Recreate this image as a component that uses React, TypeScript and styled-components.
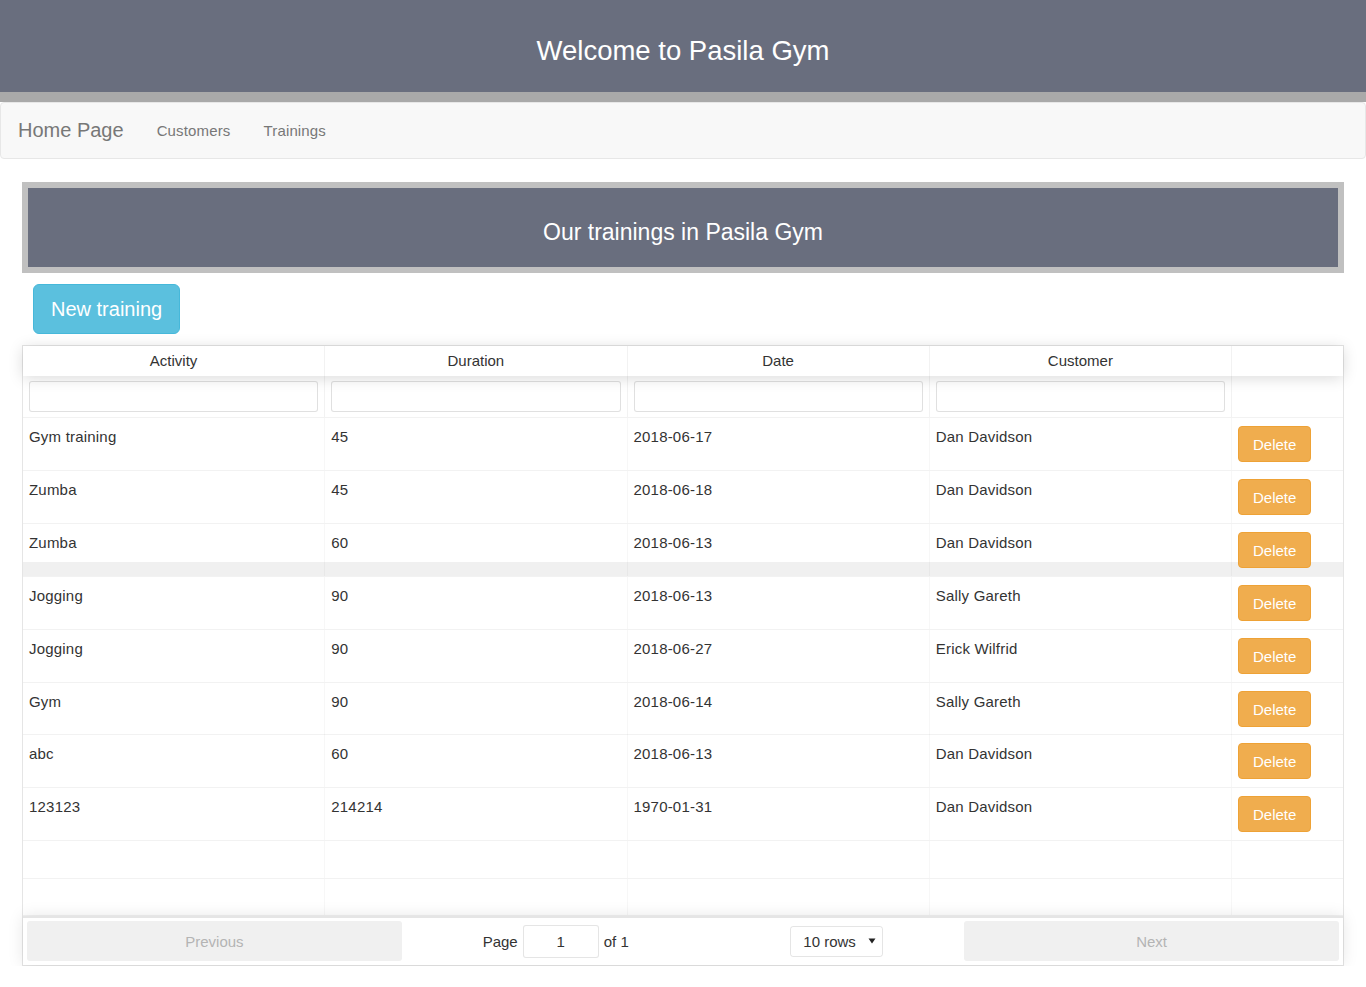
import React from "react";
import styled, { createGlobalStyle } from "styled-components";

const GlobalStyle = createGlobalStyle`
  html, body { margin: 0; padding: 0; background: #fff; }
  body {
    font-family: "Liberation Sans", Arial, Helvetica, sans-serif;
    color: #333;
    font-size: 15px;
  }
  * { box-sizing: border-box; }
`;

const Header = styled.header`
  height: 102px;
  background: #696e7e;
  border-bottom: 10px solid #a9a9a9;
  display: flex;
  align-items: center;
  justify-content: center;
  padding-top: 9px;
`;

const HeaderTitle = styled.h1`
  margin: 0;
  font-size: 27.5px;
  font-weight: normal;
  color: #fff;
`;

const NavBar = styled.nav`
  height: 57px;
  background: #f8f8f8;
  border: 1px solid #e7e7e7;
  border-radius: 4px;
  display: flex;
  align-items: center;
  padding-left: 17px;
`;

const Brand = styled.a`
  font-size: 20px;
  color: #777;
  text-decoration: none;
`;

const NavLink = styled.a`
  font-size: 15px;
  color: #777;
  text-decoration: none;
  margin-left: 33px;
  letter-spacing: 0.15px;
`;

const Main = styled.main`
  padding: 23px 22px 0 22px;
`;

const SectionBanner = styled.div`
  height: 91px;
  border: 6px solid #c0c0c0;
  background: #696e7e;
  display: flex;
  align-items: center;
  justify-content: center;
  padding-top: 9px;
`;

const SectionTitle = styled.h2`
  margin: 0;
  font-size: 23px;
  font-weight: normal;
  color: #fff;
`;

const ToolbarRow = styled.div`
  display: flex;
  padding: 11px 11px 11px 11px;
`;

const InfoButton = styled.button`
  height: 50px;
  padding: 0 17px;
  font-family: inherit;
  font-size: 20px;
  color: #fff;
  background: #5bc0de;
  border: 1px solid #46b8da;
  border-radius: 6px;
  cursor: pointer;
`;

const Table = styled.div`
  border: 1px solid rgba(0, 0, 0, 0.1);
  display: flex;
  flex-direction: column;
`;

const cols = "repeat(4, 1fr) 111px";

const HeadRow = styled.div`
  display: grid;
  grid-template-columns: ${cols};
  height: 30px;
  box-shadow: 0 2px 15px 0 rgba(0, 0, 0, 0.15);
  position: relative;
  z-index: 2;
  background: #fff;
`;

const HeadCell = styled.div`
  display: flex;
  align-items: center;
  justify-content: center;
  font-size: 15px;
  color: #333;
  padding-bottom: 1px;
  border-right: 1px solid rgba(0, 0, 0, 0.05);
  &:last-child { border-right: none; }
`;

const FilterRow = styled.div`
  display: grid;
  grid-template-columns: ${cols};
  height: 42px;
  border-bottom: 1px solid rgba(0, 0, 0, 0.05);
`;

const FilterCell = styled.div`
  padding: 5px 6px;
  border-right: 1px solid rgba(0, 0, 0, 0.05);
  &:last-child { border-right: none; }
`;

const FilterInput = styled.input`
  width: 100%;
  height: 31px;
  border: 1px solid rgba(0, 0, 0, 0.12);
  border-radius: 3px;
  background: #fff;
  outline: none;
  font-family: inherit;
  font-size: 15px;
`;

const BodyRow = styled.div<{ $band?: boolean; $h: number }>`
  display: grid;
  grid-template-columns: ${cols};
  height: ${(p) => p.$h}px;
  border-bottom: 1px solid rgba(0, 0, 0, 0.05);
  background: ${(p) =>
    p.$band
      ? "linear-gradient(to bottom, transparent 38px, #f0f0f0 38px)"
      : "transparent"};
`;

const Cell = styled.div`
  padding: 8px 6px;
  line-height: 22px;
  font-size: 15px;
  letter-spacing: 0.2px;
  color: #333;
  border-right: 1px solid rgba(0, 0, 0, 0.03);
  white-space: nowrap;
  &:last-child { border-right: none; }
`;

const DeleteButton = styled.button`
  height: 36px;
  padding: 0 14px;
  font-family: inherit;
  font-size: 15px;
  color: #fff;
  background: #f0ad4e;
  border: 1px solid #eea236;
  border-radius: 4px;
  cursor: pointer;
`;

const Pagination = styled.div`
  display: flex;
  align-items: stretch;
  border-top: 2px solid rgba(0, 0, 0, 0.1);
  box-shadow: 0 0 15px 0 rgba(0, 0, 0, 0.1);
  padding: 3px 4px 4px 4px;
  position: relative;
  z-index: 2;
  background: #fff;
`;

const PageButton = styled.button`
  flex: 1 1 0;
  min-width: 0;
  height: 40px;
  border: none;
  border-radius: 3px;
  background: #f0f0f0;
  color: #b4b4b4;
  font-family: inherit;
  font-size: 15px;
  padding: 0;
`;

const Center = styled.div`
  flex: 1.5 1 0;
  min-width: 0;
  display: flex;
  align-items: center;
  justify-content: space-around;
`;

const PageInfo = styled.span`
  display: flex;
  align-items: center;
  font-size: 15px;
  color: #333;
`;

const PageInput = styled.input`
  width: 76px;
  height: 33px;
  margin: 0 5px;
  border: 1px solid rgba(0, 0, 0, 0.1);
  border-radius: 3px;
  text-align: center;
  font-family: inherit;
  font-size: 15px;
  color: #333;
  outline: none;
`;

const RowsSelect = styled.div`
  width: 93px;
  height: 31px;
  border: 1px solid rgba(0, 0, 0, 0.1);
  border-radius: 3px;
  display: flex;
  align-items: center;
  justify-content: space-between;
  padding: 0 6px 0 12px;
  font-size: 15px;
  color: #333;
`;

const trainings = [
  ["Gym training", "45", "2018-06-17", "Dan Davidson"],
  ["Zumba", "45", "2018-06-18", "Dan Davidson"],
  ["Zumba", "60", "2018-06-13", "Dan Davidson"],
  ["Jogging", "90", "2018-06-13", "Sally Gareth"],
  ["Jogging", "90", "2018-06-27", "Erick Wilfrid"],
  ["Gym", "90", "2018-06-14", "Sally Gareth"],
  ["abc", "60", "2018-06-13", "Dan Davidson"],
  ["123123", "214214", "1970-01-31", "Dan Davidson"],
];

export default function App() {
  return (
    <>
      <GlobalStyle />
      <Header>
        <HeaderTitle>Welcome to Pasila Gym</HeaderTitle>
      </Header>
      <NavBar>
        <Brand>Home Page</Brand>
        <NavLink>Customers</NavLink>
        <NavLink>Trainings</NavLink>
      </NavBar>
      <Main>
        <SectionBanner>
          <SectionTitle>Our trainings in Pasila Gym</SectionTitle>
        </SectionBanner>
        <ToolbarRow>
          <InfoButton>New training</InfoButton>
        </ToolbarRow>
        <Table>
          <HeadRow>
            <HeadCell>Activity</HeadCell>
            <HeadCell>Duration</HeadCell>
            <HeadCell>Date</HeadCell>
            <HeadCell>Customer</HeadCell>
            <HeadCell />
          </HeadRow>
          <FilterRow>
            <FilterCell><FilterInput /></FilterCell>
            <FilterCell><FilterInput /></FilterCell>
            <FilterCell><FilterInput /></FilterCell>
            <FilterCell><FilterInput /></FilterCell>
            <FilterCell />
          </FilterRow>
          {trainings.map((t, i) => (
            <BodyRow key={i} $h={i === 5 ? 52 : 53} $band={i === 2}>
              {t.map((v, j) => (
                <Cell key={j}>{v}</Cell>
              ))}
              <Cell>
                <DeleteButton>Delete</DeleteButton>
              </Cell>
            </BodyRow>
          ))}
          {[38, 37].map((h, i) => (
            <BodyRow key={"pad" + i} $h={h}>
              <Cell />
              <Cell />
              <Cell />
              <Cell />
              <Cell />
            </BodyRow>
          ))}
          <Pagination>
            <PageButton disabled>Previous</PageButton>
            <Center>
              <PageInfo>
                Page
                <PageInput defaultValue="1" />
                of 1
              </PageInfo>
              <RowsSelect>
                <span>10 rows</span>
                <svg width="8" height="6" viewBox="0 0 8 6">
                  <path d="M0.5 0.5 L7.5 0.5 L4 5.5 Z" fill="#222" />
                </svg>
              </RowsSelect>
            </Center>
            <PageButton disabled>Next</PageButton>
          </Pagination>
        </Table>
      </Main>
    </>
  );
}
